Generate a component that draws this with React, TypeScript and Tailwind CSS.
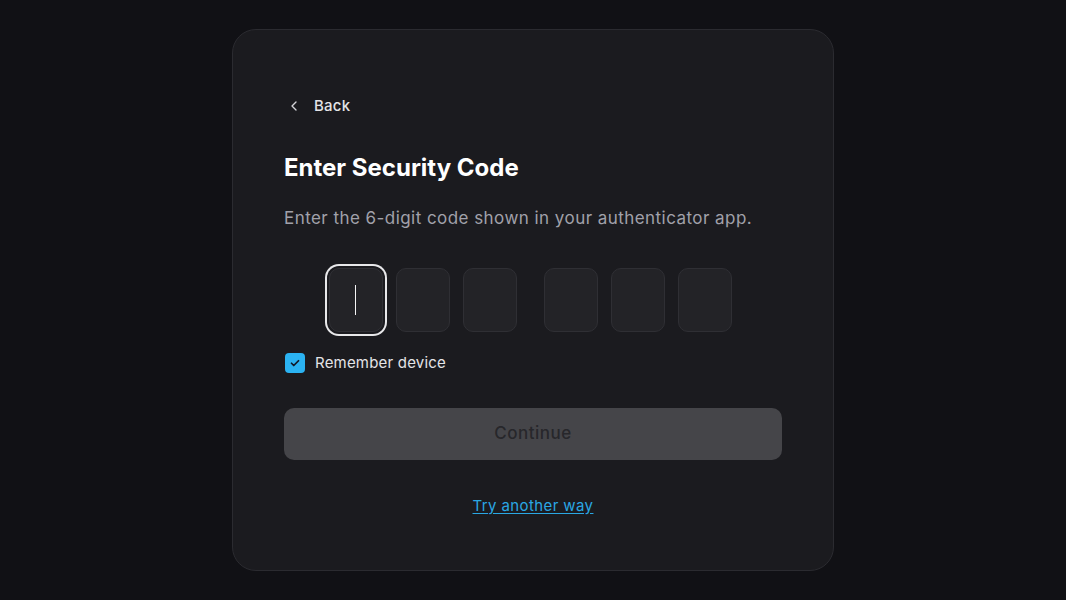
import React from "react";

export default function App() {
  const boxes = [0, 1, 2, 3, 4, 5];
  return (
    <div className="min-h-screen w-full bg-[#111115] flex items-center justify-center" style={{ fontFamily: "Inter, 'Noto Sans', sans-serif" }}>
      <div className="w-[602px] h-[542px] rounded-[24px] bg-[#1b1b1f] border border-[#2b2b30] px-[51px] pt-[66px] flex flex-col">
        <button className="flex items-center gap-[12px] h-[20px] text-[15px] font-medium text-[#e4e4e7] self-start tracking-[0.2px]">
          <svg width="16" height="16" viewBox="0 0 24 24" fill="none" stroke="#d4d4d8" strokeWidth="2" strokeLinecap="round" strokeLinejoin="round" className="ml-[2px]">
            <path d="M15 18l-6-6 6-6" />
          </svg>
          <span>Back</span>
        </button>
        <h1 className="mt-[36px] text-[24px] leading-[32px] font-bold text-white tracking-[0px]">Enter Security Code</h1>
        <p className="mt-[22px] text-[17px] leading-[24px] text-[#a1a1aa] tracking-[0.45px]">Enter the 6-digit code shown in your authenticator app.</p>
        <div className="mt-[38px] mr-[6px] flex justify-center items-center">
          {boxes.map((i) => (
            <div
              key={i}
              className={
                "w-[54px] h-[64px] rounded-[10px] bg-[#232327] border border-[#2f2f34] flex items-center justify-center " +
                (i === 0 ? "ring-2 ring-[#e8e8ea] ring-offset-2 ring-offset-[#1b1b1f] " : "") +
                (i === 3 ? "ml-[27px] " : i === 0 ? "" : "ml-[13px] ")
              }
            >
              {i === 0 && <div className="w-[1.5px] h-[30px] bg-[#f4f4f5]" />}
            </div>
          ))}
        </div>
        <label className="mt-[21px] flex items-center gap-[10px] h-[20px]">
          <span className="w-[20px] h-[20px] rounded-[4px] bg-[#2bb3f2] flex items-center justify-center ml-[1px]">
            <svg width="12" height="12" viewBox="0 0 24 24" fill="none" stroke="#111827" strokeWidth="3.5" strokeLinecap="round" strokeLinejoin="round">
              <path d="M5 12.5l4.5 4.5L19 7.5" />
            </svg>
          </span>
          <span className="text-[15px] text-[#e4e4e7] tracking-[0.2px]">Remember device</span>
        </label>
        <button className="mt-[35px] h-[52px] w-full rounded-[10px] bg-[#454549] text-[17px] font-medium text-[#27272b] tracking-[0.5px]">Continue</button>
        <div className="mt-[36px] flex justify-center">
          <a href="#" className="text-[15px] leading-[20px] text-[#2aa7e3] underline underline-offset-2 tracking-[0.4px]">Try another way</a>
        </div>
      </div>
    </div>
  );
}
